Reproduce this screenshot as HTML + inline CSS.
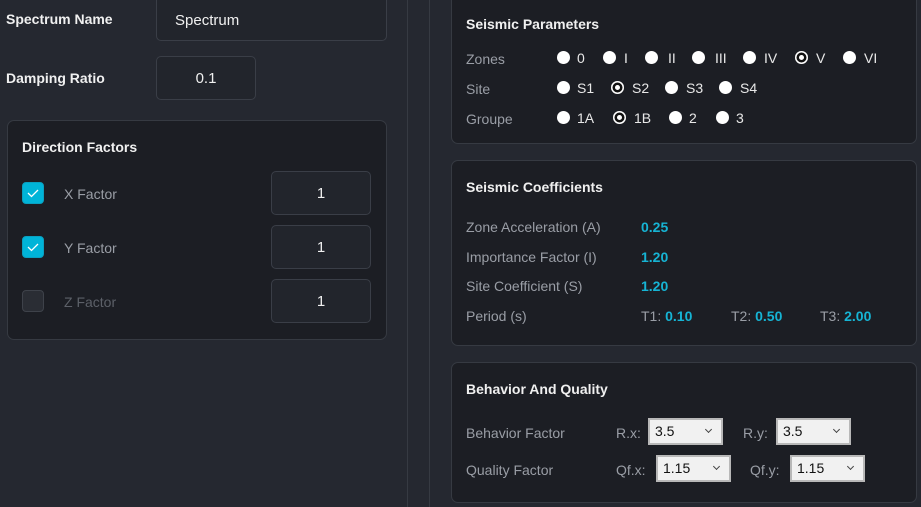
<!DOCTYPE html>
<html><head><meta charset="utf-8"><style>
*{margin:0;padding:0;box-sizing:border-box}
body{width:921px;height:507px;background:#252830;font-family:"Liberation Sans",sans-serif;position:relative;overflow:hidden;color:#e8e8e8}
.a{position:absolute;white-space:nowrap}
.b{font-weight:bold;color:#f0f0f0;font-size:14px}
.card{position:absolute;background:#1c1e24;border:1px solid #363a42;border-radius:7px}
.inp{position:absolute;background:#22252c;border:1px solid #3a3e47;border-radius:5px;color:#f0f0f0;font-size:15px;display:flex;align-items:center;justify-content:center}
.lbl{color:#9a9ea6;font-size:14px}
.cb{position:absolute;width:22px;height:22px;border-radius:4px;background:#00b4d8;border:1px solid #0aa0c0}
.cb svg{position:absolute;left:4px;top:5px}
.r{position:absolute;width:13px;height:13px;border-radius:50%;background:#fff}
.r.s{background:#fff;box-shadow:inset 0 0 0 1.5px #fff,inset 0 0 0 4px #111}
.rt{position:absolute;font-size:14px;color:#e8e8e8}
.v{color:#16b4d4;font-weight:bold;font-size:14px}
.sel{position:absolute;height:27px;background:#f1f1f1;border:2px solid #b8b8b8;color:#111;font-size:14px;padding-left:5px;line-height:23px}
.sel:after{content:"";position:absolute;right:10px;top:7px;width:4px;height:4px;border-right:1.3px solid #444;border-bottom:1.3px solid #444;transform:rotate(45deg)}
</style></head><body>
<div class="a b" style="left:6px;top:11px">Spectrum Name</div>
<div class="inp" style="left:156px;top:-5px;width:231px;height:46px;justify-content:flex-start;padding-left:18px;padding-top:4px">Spectrum</div>
<div class="a b" style="left:6px;top:70px">Damping Ratio</div>
<div class="inp" style="left:156px;top:56px;width:100px;height:44px">0.1</div>

<div class="card" style="left:7px;top:120px;width:380px;height:220px"></div>
<div class="a b" style="left:22px;top:139px">Direction Factors</div>
<div class="cb" style="left:22px;top:182px"><svg width="12" height="10"><path d="M1 5 L4.5 8.5 L11 2" stroke="#fff" stroke-width="1.3" fill="none"/></svg></div>
<div class="a lbl" style="left:64px;top:186px">X Factor</div>
<div class="cb" style="left:22px;top:236px"><svg width="12" height="10"><path d="M1 5 L4.5 8.5 L11 2" stroke="#fff" stroke-width="1.3" fill="none"/></svg></div>
<div class="a lbl" style="left:64px;top:240px">Y Factor</div>
<div class="cb" style="left:22px;top:290px;background:#2a2d34;border-color:#3e424a"></div>
<div class="a lbl" style="left:64px;top:294px;color:#5c6068">Z Factor</div>
<div class="inp" style="left:271px;top:171px;width:100px;height:44px">1</div>
<div class="inp" style="left:271px;top:225px;width:100px;height:44px">1</div>
<div class="inp" style="left:271px;top:279px;width:100px;height:44px">1</div>

<div class="a" style="left:407px;top:0;width:1px;height:507px;background:#363a42"></div>
<div class="a" style="left:429px;top:0;width:1px;height:507px;background:#363a42"></div>

<div class="card" style="left:451px;top:-8px;width:466px;height:152px"></div>
<div class="a b" style="left:466px;top:16px">Seismic Parameters</div>
<div class="a lbl" style="left:466px;top:51px">Zones</div>
<div class="a lbl" style="left:466px;top:81px">Site</div>
<div class="a lbl" style="left:466px;top:111px">Groupe</div>
<div class="r" style="left:557px;top:51px"></div><div class="rt" style="left:577px;top:50px">0</div>
<div class="r" style="left:603px;top:51px"></div><div class="rt" style="left:624px;top:50px">I</div>
<div class="r" style="left:645px;top:51px"></div><div class="rt" style="left:668px;top:50px">II</div>
<div class="r" style="left:692px;top:51px"></div><div class="rt" style="left:715px;top:50px">III</div>
<div class="r" style="left:743px;top:51px"></div><div class="rt" style="left:764px;top:50px">IV</div>
<div class="r s" style="left:795px;top:51px"></div><div class="rt" style="left:816px;top:50px">V</div>
<div class="r" style="left:843px;top:51px"></div><div class="rt" style="left:864px;top:50px">VI</div>
<div class="r" style="left:557px;top:81px"></div><div class="rt" style="left:577px;top:80px">S1</div>
<div class="r s" style="left:611px;top:81px"></div><div class="rt" style="left:632px;top:80px">S2</div>
<div class="r" style="left:665px;top:81px"></div><div class="rt" style="left:686px;top:80px">S3</div>
<div class="r" style="left:719px;top:81px"></div><div class="rt" style="left:740px;top:80px">S4</div>
<div class="r" style="left:557px;top:111px"></div><div class="rt" style="left:577px;top:110px">1A</div>
<div class="r s" style="left:613px;top:111px"></div><div class="rt" style="left:634px;top:110px">1B</div>
<div class="r" style="left:669px;top:111px"></div><div class="rt" style="left:689px;top:110px">2</div>
<div class="r" style="left:716px;top:111px"></div><div class="rt" style="left:736px;top:110px">3</div>

<div class="card" style="left:451px;top:160px;width:466px;height:186px"></div>
<div class="a b" style="left:466px;top:179px">Seismic Coefficients</div>
<div class="a lbl" style="left:466px;top:219px">Zone Acceleration (A)</div>
<div class="a lbl" style="left:466px;top:249px">Importance Factor (I)</div>
<div class="a lbl" style="left:466px;top:278px">Site Coefficient (S)</div>
<div class="a lbl" style="left:466px;top:308px">Period (s)</div>
<div class="a v" style="left:641px;top:219px">0.25</div>
<div class="a v" style="left:641px;top:249px">1.20</div>
<div class="a v" style="left:641px;top:278px">1.20</div>
<div class="a lbl" style="left:641px;top:308px">T1: <span class="v">0.10</span></div>
<div class="a lbl" style="left:731px;top:308px">T2: <span class="v">0.50</span></div>
<div class="a lbl" style="left:820px;top:308px">T3: <span class="v">2.00</span></div>

<div class="card" style="left:451px;top:362px;width:466px;height:141px"></div>
<div class="a b" style="left:466px;top:381px">Behavior And Quality</div>
<div class="a lbl" style="left:466px;top:425px">Behavior Factor</div>
<div class="a lbl" style="left:466px;top:462px">Quality Factor</div>
<div class="a lbl" style="left:616px;top:425px">R.x:</div>
<div class="sel" style="left:648px;top:418px;width:75px">3.5</div>
<div class="a lbl" style="left:743px;top:425px">R.y:</div>
<div class="sel" style="left:776px;top:418px;width:75px">3.5</div>
<div class="a lbl" style="left:616px;top:462px">Qf.x:</div>
<div class="sel" style="left:656px;top:455px;width:75px">1.15</div>
<div class="a lbl" style="left:750px;top:462px">Qf.y:</div>
<div class="sel" style="left:790px;top:455px;width:75px">1.15</div>
</body></html>
